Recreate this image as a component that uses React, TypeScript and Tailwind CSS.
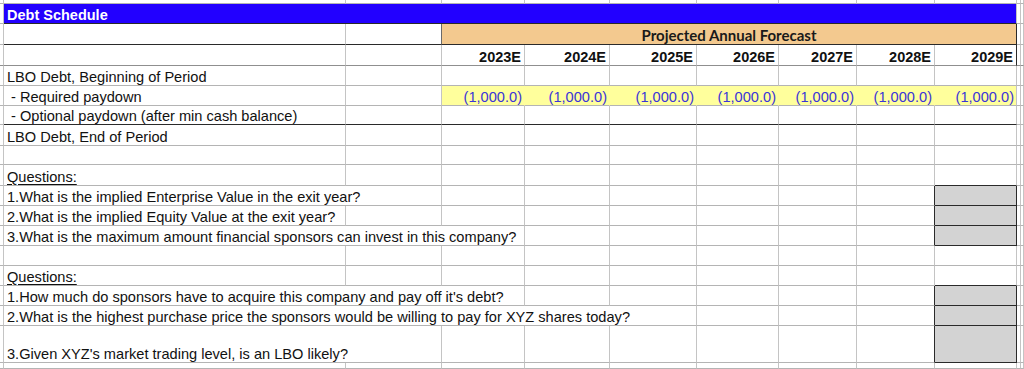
import React from 'react';

// grid line colours
const G = 'border-r-[#c4c4c4]';
const GB = 'border-b-[#b4b4b4]';
const DARK_B = 'border-b-[#2a2a2a]';
const DARK_R = 'border-r-[#2a2a2a]';

const SPAN: Record<number, string> = {
  1: '',
  2: 'col-span-2',
  3: 'col-span-3',
  4: 'col-span-4',
  5: 'col-span-5',
  7: 'col-span-7',
  9: 'col-span-9',
};

type CellProps = {
  span?: number;
  r?: string;
  b?: string;
  className?: string;
  children?: React.ReactNode;
};

function Cell({ span = 1, r = G, b = GB, className = '', children }: CellProps) {
  return (
    <div
      className={`${SPAN[span]} flex items-end overflow-hidden whitespace-nowrap border-r border-b ${r} ${b} ${className}`}
    >
      {children}
    </div>
  );
}

type LineProps = {
  label?: string;
  span?: number;
  gray?: boolean;
  grayTop?: boolean;
  b?: string;
  underline?: boolean;
  indent?: boolean;
};

// one spreadsheet row: label in column A (may overflow into B, C...), empty cells up to I
function Line({ label = '', span = 1, gray = false, grayTop = false, b = GB, underline = false, indent = false }: LineProps) {
  const rest: number[] = [];
  for (let i = span; i < 8; i++) rest.push(i);

  return (
    <>
      <Cell />
      <Cell span={span} b={b}>
        <span className={`${indent ? 'pl-[7px]' : 'pl-[3px]'} ${underline ? 'underline underline-offset-2' : ''}`}>
          {label}
        </span>
      </Cell>
      {rest.map((i) => (
        <Cell key={i} b={b} r={gray && i === 7 ? DARK_R : G} />
      ))}
      {gray ? (
        <Cell r={DARK_R} b={DARK_B} className="bg-[#d3d3d3]" />
      ) : (
        <Cell b={grayTop ? DARK_B : b} />
      )}
      <Cell />
      <Cell />
    </>
  );
}

const years = ['2023E', '2024E', '2025E', '2026E', '2027E', '2028E', '2029E'];

export default function App() {
  return (
    <div className="w-[1024px] h-[369px] overflow-hidden bg-white text-[#111] font-['Liberation_Sans',Arial,sans-serif] text-[14.6px] leading-[16px]">
      <div className="grid grid-cols-[4px_342px_96px_83px_85px_87px_82px_78px_78px_82px_4px_3px] grid-rows-[4px_20px_21px_21px_20px_20px_19px_21px_19px_21px_20px_20px_20px_20px_20px_20px_20px_37px_6px]">
        {/* row 0: sliver of the row above */}
        {Array.from({ length: 12 }).map((_, i) => (
          <Cell key={i} />
        ))}

        {/* Debt Schedule bar */}
        <Cell />
        <Cell span={9} b={DARK_B} className="bg-[#2200ff]">
          <span className="pl-[3px] font-bold text-white text-[14.5px]">Debt Schedule</span>
        </Cell>
        <Cell />
        <Cell />

        {/* Projected Annual Forecast */}
        <Cell />
        <Cell b={DARK_B} />
        <Cell b={DARK_B} r="border-r-[#6a6a6a]" />
        <Cell span={7} r={DARK_R} b={DARK_B} className="bg-[#f3c98f] justify-center">
          <span className="font-['Lato',sans-serif] font-bold text-[15px] leading-[17px] text-[#1a1a1a]">
            Projected Annual Forecast
          </span>
        </Cell>
        <Cell />
        <Cell />

        {/* years */}
        <Cell b="border-b-[#8f8f8f]" />
        <Cell b="border-b-[#8f8f8f]" />
        <Cell b="border-b-[#8f8f8f]" />
        {years.map((y, i) => (
          <Cell key={y} b="border-b-[#8f8f8f]" r={i === 6 ? DARK_R : G} className="justify-end">
            <span className="pr-[3px] font-bold text-[14.5px]">{y}</span>
          </Cell>
        ))}
        <Cell b="border-b-[#8f8f8f]" />
        <Cell b="border-b-[#8f8f8f]" />

        <Line label="LBO Debt, Beginning of Period" />

        {/* required paydown */}
        <Cell />
        <Cell>
          <span className="pl-[7px]">- Required paydown</span>
        </Cell>
        <Cell />
        {years.map((y, i) => (
          <Cell
            key={y}
            r={i === 6 ? G : 'border-r-[#ffff9c]'}
            className="bg-[#ffff9c] justify-end"
          >
            <span className="pr-[2px] text-[#3a34d8]">(1,000.0)</span>
          </Cell>
        ))}
        <Cell />
        <Cell />

        <Line label="- Optional paydown (after min cash balance)" indent b={DARK_B} />
        <Line label="LBO Debt, End of Period" />
        <Line />
        <Line label="Questions:" underline grayTop />
        <Line label="1.What is the implied Enterprise Value in the exit year?" span={2} gray />
        <Line label="2.What is the implied Equity Value at the exit year?" gray />
        <Line label="3.What is the maximum amount financial sponsors can invest in this company?" span={3} gray />
        <Line />
        <Line label="Questions:" underline grayTop />
        <Line label="1.How much do sponsors have to acquire this company and pay off it's debt?" span={3} gray />
        <Line
          label="2.What is the highest purchase price the sponsors would be willing to pay for XYZ shares today?"
          span={5}
          gray
        />
        <Line label="3.Given XYZ's market trading level, is an LBO likely?" span={2} gray />
        <Line />
      </div>
    </div>
  );
}
